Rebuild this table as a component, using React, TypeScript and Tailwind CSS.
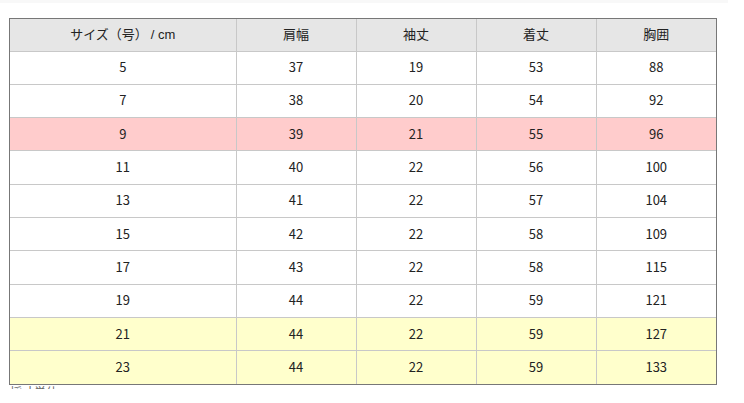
const HEAD = ["サイズ（号） / cm", "肩幅", "袖丈", "着丈", "胸囲"];

const ROWS = [
  { v: ["5", "37", "19", "53", "88"], tone: "" },
  { v: ["7", "38", "20", "54", "92"], tone: "" },
  { v: ["9", "39", "21", "55", "96"], tone: "pink" },
  { v: ["11", "40", "22", "56", "100"], tone: "" },
  { v: ["13", "41", "22", "57", "104"], tone: "" },
  { v: ["15", "42", "22", "58", "109"], tone: "" },
  { v: ["17", "43", "22", "58", "115"], tone: "" },
  { v: ["19", "44", "22", "59", "121"], tone: "" },
  { v: ["21", "44", "22", "59", "127"], tone: "yellow" },
  { v: ["23", "44", "22", "59", "133"], tone: "yellow" },
];

export default function App() {
  return (
    <div
      className="w-[744px] h-[403px] bg-white overflow-hidden text-[#222]"
      style={{ fontFamily: '"Noto Sans CJK JP", sans-serif' }}
    >
      <div className="h-[3px] w-[728px] bg-[#f8f8f8]" />
      <div className="mt-[15px] ml-[9px]">
        <div className="w-[708px] border border-[#777]">
          <table className="border-collapse w-full table-fixed text-[13px]">
            <colgroup>
              <col className="w-[226px]" />
              <col className="w-[120px]" />
              <col className="w-[120px]" />
              <col className="w-[120px]" />
              <col className="w-[120px]" />
            </colgroup>
            <thead>
              <tr className="h-[32px] bg-[#e6e6e6]">
                {HEAD.map((h, i) => (
                  <th
                    key={i}
                    className="border border-t-0 border-[#c8c8c8] first:border-l-0 last:border-r-0 font-normal text-center p-0 pb-[2px] align-middle leading-none"
                  >
                    {i === 0 ? (
                      <span>
                        サイズ（号）{" "}
                        <span style={{ fontFamily: '"Liberation Sans", sans-serif' }}>/ cm</span>
                      </span>
                    ) : (
                      h
                    )}
                  </th>
                ))}
              </tr>
            </thead>
            <tbody>
              {ROWS.map((r, i) => (
                <tr
                  key={i}
                  className={
                    "h-[33.3px] " +
                    (r.tone === "pink" ? "bg-[#ffcccc]" : r.tone === "yellow" ? "bg-[#ffffcc]" : "bg-white")
                  }
                >
                  {r.v.map((c, j) => (
                    <td
                      key={j}
                      className={
                        "border border-[#c8c8c8] first:border-l-0 last:border-r-0 text-center p-0 pb-[2px] align-middle leading-none" +
                        (i === ROWS.length - 1 ? " border-b-0" : "")
                      }
                    >
                      {c}
                    </td>
                  ))}
                </tr>
              ))}
            </tbody>
          </table>
        </div>
        <div className="h-[4px] overflow-hidden">
          <p className="text-[12px] leading-[14px] text-[#666] pl-[1px]">採寸単位 cm</p>
        </div>
      </div>
    </div>
  );
}
